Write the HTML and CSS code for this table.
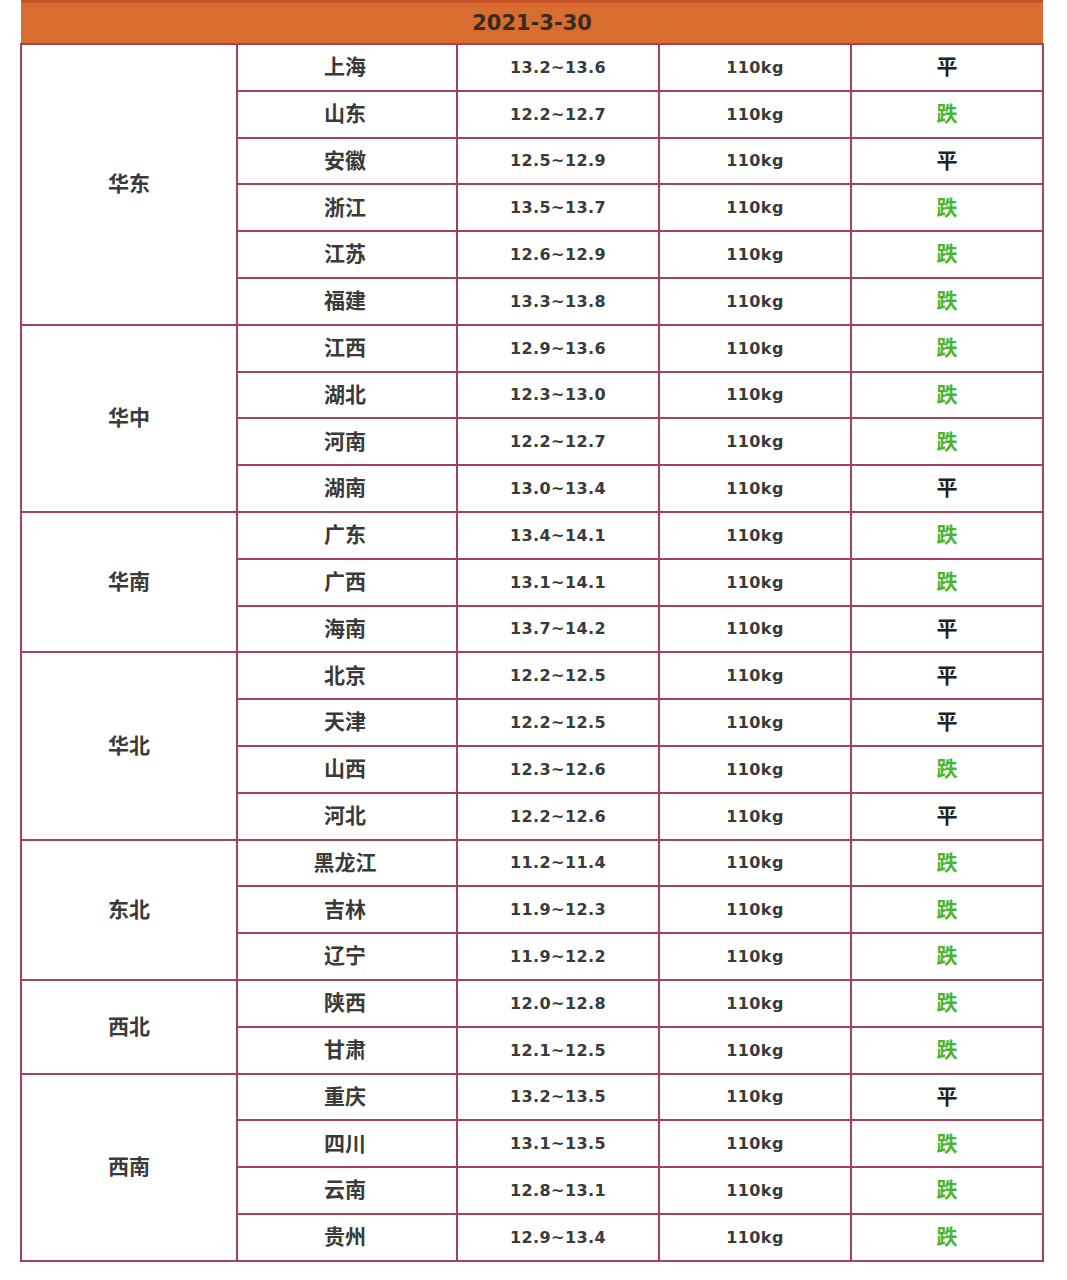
FILE: index.html
```html
<!DOCTYPE html>
<html lang="zh">
<head>
<meta charset="utf-8">
<title>2021-3-30</title>
<link rel="stylesheet" href="styles.css">
</head>
<body>
<table class="price">
<colgroup>
<col class="c1"><col class="c2"><col class="c3"><col class="c4"><col class="c5">
</colgroup>
<thead>
<tr><th colspan="5" class="head">2021-3-30</th></tr>
</thead>
<tbody>
<tr><td rowspan="6" class="region">华东</td><td class="prov">上海</td><td class="num">13.2~13.6</td><td class="num">110kg</td><td class="flat">平</td></tr>
<tr><td class="prov">山东</td><td class="num">12.2~12.7</td><td class="num">110kg</td><td class="down">跌</td></tr>
<tr><td class="prov">安徽</td><td class="num">12.5~12.9</td><td class="num">110kg</td><td class="flat">平</td></tr>
<tr><td class="prov">浙江</td><td class="num">13.5~13.7</td><td class="num">110kg</td><td class="down">跌</td></tr>
<tr><td class="prov">江苏</td><td class="num">12.6~12.9</td><td class="num">110kg</td><td class="down">跌</td></tr>
<tr><td class="prov">福建</td><td class="num">13.3~13.8</td><td class="num">110kg</td><td class="down">跌</td></tr>
<tr><td rowspan="4" class="region">华中</td><td class="prov">江西</td><td class="num">12.9~13.6</td><td class="num">110kg</td><td class="down">跌</td></tr>
<tr><td class="prov">湖北</td><td class="num">12.3~13.0</td><td class="num">110kg</td><td class="down">跌</td></tr>
<tr><td class="prov">河南</td><td class="num">12.2~12.7</td><td class="num">110kg</td><td class="down">跌</td></tr>
<tr><td class="prov">湖南</td><td class="num">13.0~13.4</td><td class="num">110kg</td><td class="flat">平</td></tr>
<tr><td rowspan="3" class="region">华南</td><td class="prov">广东</td><td class="num">13.4~14.1</td><td class="num">110kg</td><td class="down">跌</td></tr>
<tr><td class="prov">广西</td><td class="num">13.1~14.1</td><td class="num">110kg</td><td class="down">跌</td></tr>
<tr><td class="prov">海南</td><td class="num">13.7~14.2</td><td class="num">110kg</td><td class="flat">平</td></tr>
<tr><td rowspan="4" class="region">华北</td><td class="prov">北京</td><td class="num">12.2~12.5</td><td class="num">110kg</td><td class="flat">平</td></tr>
<tr><td class="prov">天津</td><td class="num">12.2~12.5</td><td class="num">110kg</td><td class="flat">平</td></tr>
<tr><td class="prov">山西</td><td class="num">12.3~12.6</td><td class="num">110kg</td><td class="down">跌</td></tr>
<tr><td class="prov">河北</td><td class="num">12.2~12.6</td><td class="num">110kg</td><td class="flat">平</td></tr>
<tr><td rowspan="3" class="region">东北</td><td class="prov">黑龙江</td><td class="num">11.2~11.4</td><td class="num">110kg</td><td class="down">跌</td></tr>
<tr><td class="prov">吉林</td><td class="num">11.9~12.3</td><td class="num">110kg</td><td class="down">跌</td></tr>
<tr><td class="prov">辽宁</td><td class="num">11.9~12.2</td><td class="num">110kg</td><td class="down">跌</td></tr>
<tr><td rowspan="2" class="region">西北</td><td class="prov">陕西</td><td class="num">12.0~12.8</td><td class="num">110kg</td><td class="down">跌</td></tr>
<tr><td class="prov">甘肃</td><td class="num">12.1~12.5</td><td class="num">110kg</td><td class="down">跌</td></tr>
<tr><td rowspan="4" class="region">西南</td><td class="prov">重庆</td><td class="num">13.2~13.5</td><td class="num">110kg</td><td class="flat">平</td></tr>
<tr><td class="prov">四川</td><td class="num">13.1~13.5</td><td class="num">110kg</td><td class="down">跌</td></tr>
<tr><td class="prov">云南</td><td class="num">12.8~13.1</td><td class="num">110kg</td><td class="down">跌</td></tr>
<tr><td class="prov">贵州</td><td class="num">12.9~13.4</td><td class="num">110kg</td><td class="down">跌</td></tr>
</tbody>
</table>
</body>
</html>
```

FILE: styles.css
```css
html, body {
  margin: 0;
  padding: 0;
  background: #ffffff;
}

body {
  padding: 0 0 0 20px;
  font-family: "Noto Sans CJK SC", "Noto Sans", sans-serif;
  color: #333333;
}

.price {
  border-collapse: collapse;
  table-layout: fixed;
  width: 1022px;
}

.c1 { width: 216px; }
.c2 { width: 220px; }
.c3 { width: 202px; }
.c4 { width: 192px; }
.c5 { width: 192px; }

.head {
  height: 40px;
  padding: 0;
  background: #d96c2f;
  border-top: 3px solid #c9542a;
  border-bottom: 1px solid #e7a37c;
  color: #3a2a22;
  font-family: "DejaVu Sans", sans-serif;
  font-weight: bold;
  font-size: 21px;
  text-align: center;
  vertical-align: middle;
}

.price td {
  height: 41.8px;
  padding: 0 0 3px;
  border: 2px solid #a6405e;
  text-align: center;
  vertical-align: middle;
  font-weight: bold;
  font-size: 21px;
  line-height: 1.2;
}

.price td.region,
.price td.prov {
  color: #3a3a3a;
}

.price td.prov {
  padding-right: 4px;
}

.price td.num {
  padding: 1.5px 0;
  font-family: "DejaVu Sans", sans-serif;
  font-size: 16px;
  color: #3a3a3a;
  letter-spacing: 0.4px;
}

.price td.flat {
  color: #222222;
}

.price td.down {
  color: #4cb52f;
}
```
